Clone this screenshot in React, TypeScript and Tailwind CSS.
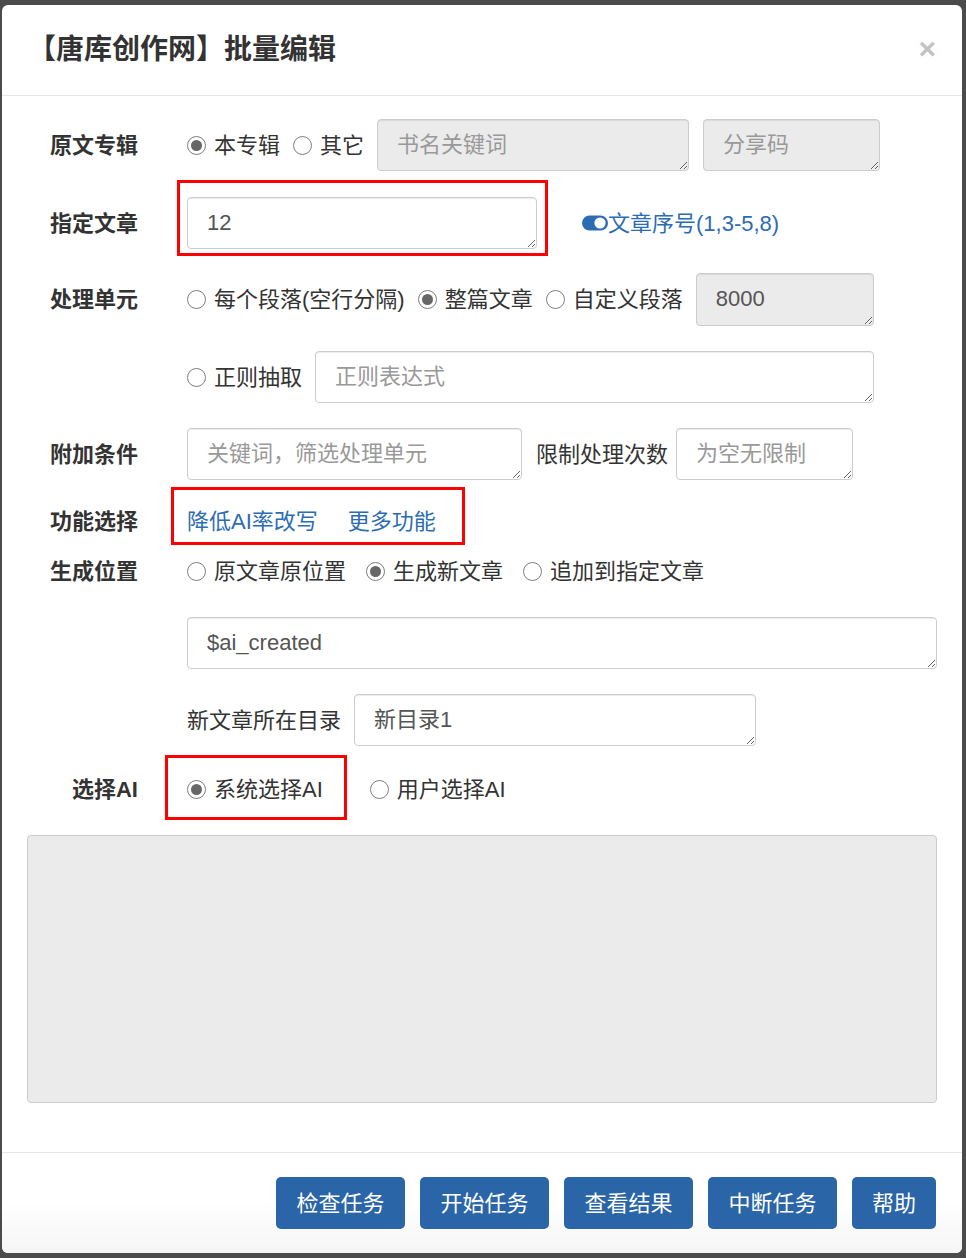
import React from "react";

const FONT = { fontFamily: '"Liberation Sans", "Noto Sans CJK SC", sans-serif' };

function Radio({ checked }: { checked?: boolean }) {
  return (
    <span className="inline-flex h-[19px] w-[19px] shrink-0 items-center justify-center rounded-full border-[1.5px] border-[#7d7d7d] bg-white">
      {checked && <span className="h-[11px] w-[11px] rounded-full bg-[#676767]" />}
    </span>
  );
}

function Opt({ checked, label, className }: { checked?: boolean; label: string; className?: string }) {
  return (
    <span className={`flex items-center gap-[8px] ${className ?? ""}`}>
      <Radio checked={checked} />
      <span className="text-[22px] text-[#333]">{label}</span>
    </span>
  );
}

function Field({
  className,
  value,
  placeholder,
  disabled,
}: {
  className?: string;
  value?: string;
  placeholder?: string;
  disabled?: boolean;
}) {
  return (
    <textarea
      rows={1}
      readOnly
      defaultValue={value}
      placeholder={placeholder}
      style={FONT}
      className={`block h-[52px] shrink-0 overflow-hidden rounded-[4px] border border-[#ccc] px-[19px] py-[11px] text-[22px] leading-[28px] text-[#555] placeholder:text-[#999] shadow-[inset_0_1px_1px_rgba(0,0,0,0.075)] outline-none ${
        disabled ? "bg-[#ebebeb]" : "bg-white"
      } ${className ?? ""}`}
    />
  );
}

function Row({ label, className, children }: { label?: string; className?: string; children: React.ReactNode }) {
  return (
    <div className={`flex items-center ${className ?? ""}`}>
      <div className="w-[111px] shrink-0 text-right text-[22px] font-bold text-[#333]">{label}</div>
      <div className="ml-[49px] flex flex-1 items-center">{children}</div>
    </div>
  );
}

function Toggle() {
  return (
    <svg width="26" height="16" viewBox="0 0 26 16" className="shrink-0">
      <rect x="0" y="0.5" width="26" height="15" rx="7.5" fill="#2c6cb3" />
      <circle cx="18" cy="8" r="5.6" fill="#fff" />
    </svg>
  );
}

export default function App() {
  return (
    <div style={FONT} className="min-h-[1258px] bg-[#4b4b4b] pb-[5px] pl-[2px] pr-[4px] pt-[5px]">
      <div className="flex h-[1248px] w-[960px] flex-col overflow-hidden rounded-[6px] bg-white">
        {/* header */}
        <div className="flex h-[91px] shrink-0 items-center justify-between border-b border-[#e5e5e5] pl-[26px] pr-[26px]">
          <div className="text-[28px] font-bold text-[#333]">【唐库创作网】批量编辑</div>
          <div className="pb-[2px] text-[30px] font-bold leading-none text-[#c2c2c2]">×</div>
        </div>

        {/* body */}
        <div className="flex-1 px-[25px] pt-[23px]">
          <Row label="原文专辑" className="h-[52px]">
            <Opt checked label="本专辑" />
            <Opt label="其它" className="ml-[13px]" />
            <Field disabled placeholder="书名关键词" className="ml-[13px] w-[312px]" />
            <Field disabled placeholder="分享码" className="ml-[14px] w-[177px]" />
          </Row>

          <Row label="指定文章" className="mt-[26px] h-[52px]">
            <div className="relative">
              <Field value="12" className="w-[350px]" />
              <div className="pointer-events-none absolute -bottom-[7px] -left-[10px] -right-[11px] -top-[17px] border-[3px] border-[#ff0000]" />
            </div>
            <span className="ml-[45px] flex items-center text-[22px] text-[#2c6cb3]">
              <Toggle />
              文章序号(1,3-5,8)
            </span>
          </Row>

          <Row label="处理单元" className="mt-[24px] h-[53px]">
            <Opt label="每个段落(空行分隔)" />
            <Opt checked label="整篇文章" className="ml-[13px]" />
            <Opt label="自定义段落" className="ml-[13px]" />
            <Field disabled value="8000" className="ml-[13px] h-[53px] w-[178px]" />
          </Row>

          <Row className="mt-[25px] h-[52px]">
            <Opt label="正则抽取" />
            <Field placeholder="正则表达式" className="ml-[13px] w-[559px]" />
          </Row>

          <Row label="附加条件" className="mt-[25px] h-[52px]">
            <Field placeholder="关键词，筛选处理单元" className="w-[335px]" />
            <span className="ml-[14px] text-[22px] text-[#333]">限制处理次数</span>
            <Field placeholder="为空无限制" className="ml-[8px] w-[177px]" />
          </Row>

          <Row label="功能选择" className="mt-[21px] h-[40px]">
            <div className="relative flex h-[40px] items-center gap-[30px] text-[22px] text-[#2c6cb3]">
              <span>降低AI率改写</span>
              <span>更多功能</span>
              <div className="pointer-events-none absolute -bottom-[4px] -left-[16px] -right-[29px] -top-[14px] border-[3px] border-[#ff0000]" />
            </div>
          </Row>

          <Row label="生成位置" className="mt-[10px] h-[40px]">
            <Opt label="原文章原位置" />
            <Opt checked label="生成新文章" className="ml-[20px]" />
            <Opt label="追加到指定文章" className="ml-[20px]" />
          </Row>

          <Row className="mt-[26px] h-[52px]">
            <Field value="$ai_created" className="w-full" />
          </Row>

          <Row className="mt-[25px] h-[52px]">
            <span className="text-[22px] text-[#333]">新文章所在目录</span>
            <Field value="新目录1" className="ml-[13px] w-[402px]" />
          </Row>

          <Row label="选择AI" className="mt-[23px] h-[40px]">
            <div className="relative flex h-[40px] items-center">
              <Opt checked label="系统选择AI" />
              <div className="pointer-events-none absolute -bottom-[11px] -left-[22px] -right-[24px] -top-[14px] border-[3px] border-[#ff0000]" />
            </div>
            <Opt label="用户选择AI" className="ml-[47px]" />
          </Row>

          <div className="mt-[26px] h-[268px] w-full rounded-[4px] border border-[#ccc] bg-[#ebebeb]" />
        </div>

        {/* footer */}
        <div className="flex h-[101px] shrink-0 items-center justify-end gap-[15px] border-t border-[#e5e5e5] bg-gradient-to-b from-white via-white to-[#f5f5f5] pr-[26px]">
          {["检查任务", "开始任务", "查看结果", "中断任务"].map((t) => (
            <button
              key={t}
              className="h-[52px] w-[129px] rounded-[5px] bg-[#2a65a7] text-[22px] text-white"
              style={FONT}
            >
              {t}
            </button>
          ))}
          <button className="h-[52px] w-[84px] rounded-[5px] bg-[#2a65a7] text-[22px] text-white" style={FONT}>
            帮助
          </button>
        </div>
      </div>
    </div>
  );
}
